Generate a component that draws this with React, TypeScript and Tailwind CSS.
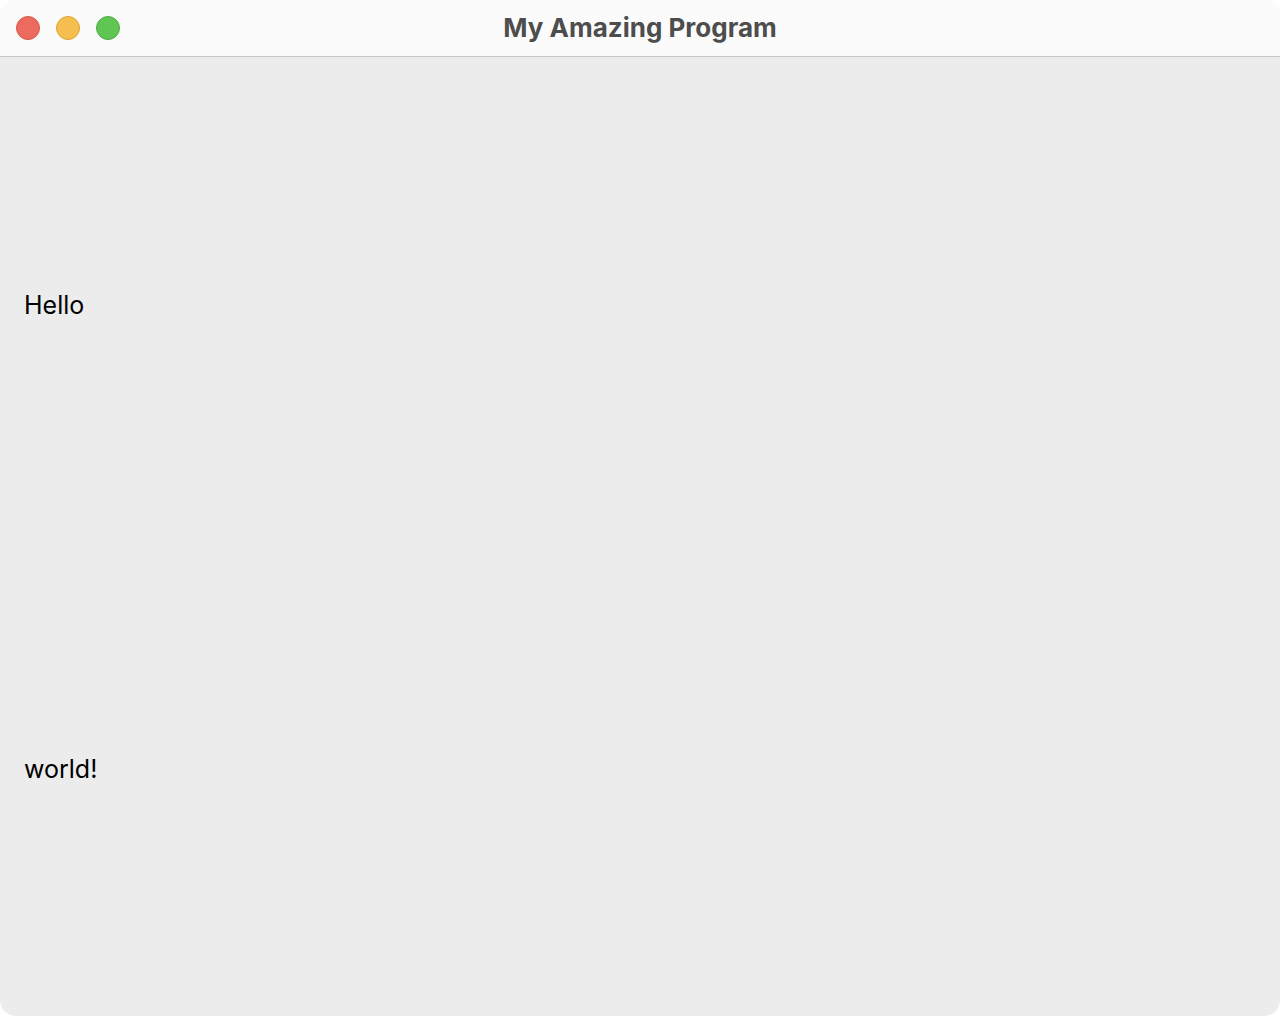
const TrafficLight = ({ fill, edge }: { fill: string; edge: string }) => (
  <span className={`block w-6 h-6 rounded-full border ${fill} ${edge}`} />
);

export default function App() {
  return (
    <div className="w-[1280px] h-[1016px] bg-white">
      <div className="flex flex-col h-full rounded-[16px] overflow-hidden bg-[#ececec]">
        {/* Title bar */}
        <div className="relative flex items-center h-[57px] shrink-0 border-b border-[#c6c6c6] bg-[#fbfbfb] px-4">
          <div className="flex gap-4">
            <TrafficLight fill="bg-[#ed6a5e]" edge="border-[#d5564b]" />
            <TrafficLight fill="bg-[#f5bf4f]" edge="border-[#d9a33a]" />
            <TrafficLight fill="bg-[#61c554]" edge="border-[#4ea944]" />
          </div>
          <div className="absolute inset-0 flex items-center justify-center pb-[2px] pointer-events-none">
            <span className="font-['Inter',sans-serif] font-bold text-[26px] text-[#4d4d4d]">
              My Amazing Program
            </span>
          </div>
        </div>

        {/* Content */}
        <div className="flex flex-col flex-1 pt-[17px] pb-[14px] px-6 font-['Inter',sans-serif] text-[25px] text-black">
          <div className="flex flex-1 items-center">Hello</div>
          <div className="flex flex-1 items-center">world!</div>
        </div>
      </div>
    </div>
  );
}
